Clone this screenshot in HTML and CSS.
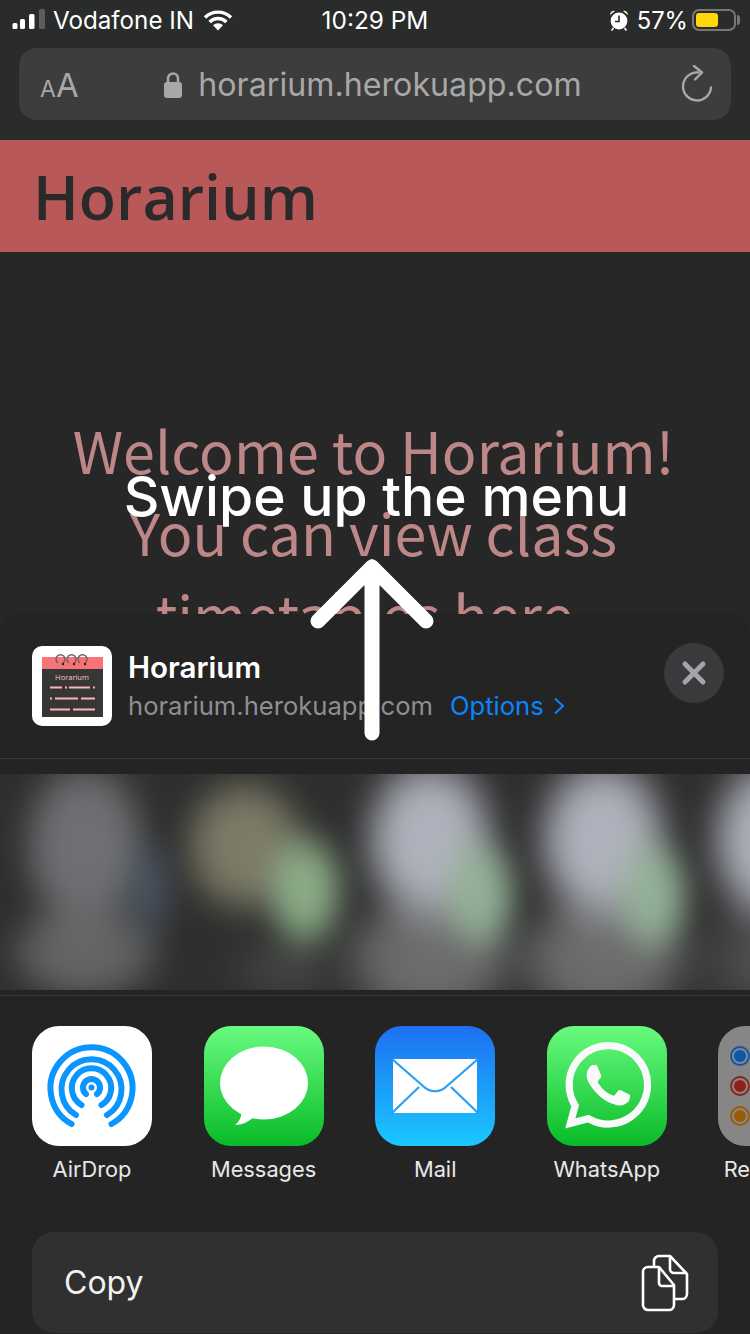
FILE: index.html
```html
<!DOCTYPE html>
<html lang="en">
<head>
  <meta charset="UTF-8">
  <title>Horarium share sheet</title>
  <link rel="stylesheet" href="styles.css">
</head>
<body>
  <div class="phone">
    <div class="toolbar">
      <div class="status">
        <div class="status-left">
          <svg class="signal" width="34" height="22" viewBox="0 0 34 22">
            <rect x="0.5" y="14" width="5" height="6" rx="1.5" fill="#fff"/>
            <rect x="8" y="10" width="5" height="10" rx="1.5" fill="#fff"/>
            <rect x="17" y="5" width="5.5" height="15" rx="1.5" fill="#fff"/>
            <rect x="27" y="0" width="6" height="20" rx="1.5" fill="#5c5c5c"/>
          </svg>
          <span>Vodafone IN</span>
          <svg width="30" height="24" viewBox="0 0 30 24">
            <path d="M2 9.5a18.5 18.5 0 0 1 26 0M6.6 14a12 12 0 0 1 16.8 0" fill="none" stroke="#fff" stroke-width="3.4" stroke-linecap="butt"/>
            <path d="M10 17.2a7.2 7.2 0 0 1 10 0L15 22.5z" fill="#fff"/>
          </svg>
        </div>
        <div class="status-time">10:29 PM</div>
        <div class="status-right">
          <svg width="20" height="22" viewBox="0 0 20 22">
            <circle cx="10" cy="12" r="8.4" fill="#fff"/>
            <path d="M10 6.5V12.5H6" fill="none" stroke="#2a2b2b" stroke-width="1.6"/>
            <path d="M1 6a4 4 0 0 1 5-4zM19 6a4 4 0 0 0-5-4z" fill="#fff"/>
            <path d="M4.5 19l-2 2.4M15.5 19l2 2.4" stroke="#fff" stroke-width="1.6"/>
          </svg>
          <span class="percent">57%</span>
          <div class="battery"><div class="battery-fill"></div></div>
        </div>
      </div>
      <div class="urlbar">
        <div class="aa"><span class="aa-small">A</span>A</div>
        <div class="url">
          <svg width="20" height="27" viewBox="0 0 20 27">
            <path d="M5 12V7.5a5 5 0 0 1 10 0V12" fill="none" stroke="#a8a8a8" stroke-width="2.6"/>
            <rect x="1" y="11" width="18" height="16" rx="3" fill="#a8a8a8"/>
          </svg>
          <span>horarium.herokuapp.com</span>
        </div>
        <svg width="32" height="38" viewBox="0 0 32 38">
          <path d="M17.5 7.5a14 14 0 1 0 12.5 15" fill="none" stroke="#a8a8a8" stroke-width="2.4" stroke-linecap="round"/>
          <path d="M13 1l8 6.5-7 7" fill="none" stroke="#a8a8a8" stroke-width="2.4" stroke-linecap="round" stroke-linejoin="round"/>
        </svg>
      </div>
    </div>

    <div class="site-header">Horarium</div>
    <div class="site-body">Welcome to Horarium! You can view class <span class="site-last">timetables here</span></div>

    <div class="sheet">
      <div class="sheet-head">
        <svg class="site-icon" width="80" height="80" viewBox="0 0 80 80">
          <rect width="80" height="80" rx="10" fill="#fff"/>
          <rect x="10" y="11" width="61" height="60" fill="#363636"/>
          <rect x="10" y="11" width="61" height="12" fill="#f87378"/>
          <g fill="none" stroke="#666" stroke-width="1.4">
            <path d="M26 17a4.500 4.500 0 1 1 5 0M37 17a4.500 4.500 0 1 1 5 0M48 17a4.500 4.500 0 1 1 5 0"/>
          </g>
          <g fill="#222">
            <circle cx="31" cy="18" r="1.200"/><circle cx="42" cy="18" r="1.200"/><circle cx="53" cy="18" r="1.200"/>
          </g>
          <text x="40" y="34" class="site-icon-text" text-anchor="middle">Horarium</text>
          <g stroke="#ffb3b3" stroke-width="1.800">
            <path d="M18 41.500H30M33 41.500H35M37 41.500H58M61 41.500H63"/>
            <path d="M18 52.500H20M23 52.500H46M49 52.500H63"/>
            <path d="M18 63.500H38M41 63.500H63"/>
          </g>
        </svg>
        <div class="site-info">
          <div class="site-title">Horarium</div>
          <div class="site-sub">
            <span>horarium.herokuapp.com</span>
            <span class="options">Options
              <svg width="12" height="18" viewBox="0 0 12 18"><path d="M2 1.500L10 9 2 16.500" fill="none" stroke="#0a84ff" stroke-width="2"/></svg>
            </span>
          </div>
        </div>
        <div class="close">
          <svg width="26" height="26" viewBox="0 0 26 26"><path d="M4 4L22 22M22 4L4 22" stroke="#a3a3a8" stroke-width="5" stroke-linecap="round"/></svg>
        </div>
      </div>

      <div class="people"></div>

      <div class="apps">
        <div class="app">
          <svg class="app-icon" width="120" height="120" viewBox="0 0 120 120">
            <rect width="120" height="120" rx="27" fill="#fff"/>
            <g fill="none" stroke="#0a95ff" stroke-width="6" stroke-linecap="round">
              <path d="M39.500 98A41 41 0 1 1 79.500 98"/>
              <path d="M44 89A30 30 0 1 1 75 89"/>
              <path d="M49.500 79A19.700 19.700 0 1 1 69.500 79"/>
              <path d="M54 68A8.500 8.500 0 1 1 65 68"/>
            </g>
            <circle cx="59.500" cy="61.500" r="3" fill="#0a95ff"/>
          </svg>
          <div class="app-name">AirDrop</div>
        </div>
        <div class="app">
          <svg class="app-icon" width="120" height="120" viewBox="0 0 120 120">
            <defs>
              <linearGradient id="green" x1="0" y1="0" x2="0" y2="1">
                <stop offset="0" stop-color="#68fb7f"/>
                <stop offset="1" stop-color="#09bb28"/>
              </linearGradient>
              <linearGradient id="blue" x1="0" y1="0" x2="0" y2="1">
                <stop offset="0" stop-color="#1d6ff2"/>
                <stop offset="1" stop-color="#1ac8ff"/>
              </linearGradient>
            </defs>
            <rect width="120" height="120" rx="27" fill="url(#green)"/>
            <ellipse cx="60" cy="57" rx="44" ry="36.500" fill="#fff"/>
            <path d="M37 84C38 90 36 95 31 99C38 99 44 96 50 91z" fill="#fff"/>
          </svg>
          <div class="app-name">Messages</div>
        </div>
        <div class="app">
          <svg class="app-icon" width="120" height="120" viewBox="0 0 120 120">
            <rect width="120" height="120" rx="27" fill="url(#blue)"/>
            <rect x="18" y="33" width="84" height="54" rx="2" fill="#fff"/>
            <g fill="none" stroke="#2a9ff5" stroke-width="2.200">
              <path d="M17 33L48 60C55 67 65 67 72 60L103 33"/>
              <path d="M17 87L44 61M103 87L76 61"/>
            </g>
          </svg>
          <div class="app-name">Mail</div>
        </div>
        <div class="app">
          <svg class="app-icon" width="120" height="120" viewBox="0 0 120 120">
            <rect width="120" height="120" rx="27" fill="url(#green)"/>
            <g transform="translate(18 16) scale(3.6)">
              <path fill="#fafafa" d="M17.472 14.382c-.297-.149-1.758-.867-2.03-.967-.273-.099-.471-.148-.67.15-.197.297-.767.966-.94 1.164-.173.199-.347.223-.644.075-.297-.15-1.255-.463-2.39-1.475-.883-.788-1.48-1.761-1.653-2.059-.173-.297-.018-.458.13-.606.134-.133.298-.347.446-.52.149-.174.198-.298.298-.497.099-.198.05-.371-.025-.52-.075-.149-.669-1.612-.916-2.207-.242-.579-.487-.5-.669-.51-.173-.008-.371-.01-.57-.01-.198 0-.52.074-.792.372-.272.297-1.04 1.016-1.04 2.479 0 1.462 1.065 2.875 1.213 3.074.149.198 2.096 3.2 5.077 4.487.709.306 1.262.489 1.694.625.712.227 1.36.195 1.871.118.571-.085 1.758-.719 2.006-1.413.248-.694.248-1.289.173-1.413-.074-.124-.272-.198-.57-.347m-5.421 7.403h-.004a9.87 9.87 0 01-5.031-1.378l-.361-.214-3.741.982.998-3.648-.235-.374a9.86 9.86 0 01-1.51-5.26c.001-5.45 4.436-9.884 9.888-9.884 2.64 0 5.122 1.03 6.988 2.898a9.825 9.825 0 012.893 6.994c-.003 5.45-4.437 9.884-9.885 9.884m8.413-18.297A11.815 11.815 0 0012.05 0C5.495 0 .16 5.335.157 11.892c0 2.096.547 4.142 1.588 5.945L.057 24l6.305-1.654a11.882 11.882 0 005.683 1.448h.005c6.554 0 11.89-5.335 11.893-11.893a11.821 11.821 0 00-3.48-8.413z"/>
            </g>
          </svg>
          <div class="app-name">WhatsApp</div>
        </div>
        <div class="app">
          <svg class="app-icon" width="120" height="120" viewBox="0 0 120 120">
            <rect width="120" height="120" rx="27" fill="#868686"/>
            <g stroke-width="1.800" fill="#0a56a8" stroke="#0a56a8">
              <circle cx="22" cy="30" r="9" fill="none"/><circle cx="22" cy="30" r="6" stroke="none"/>
            </g>
            <g stroke-width="1.800" fill="#8f2019" stroke="#8f2019">
              <circle cx="22" cy="60" r="9" fill="none"/><circle cx="22" cy="60" r="6" stroke="none"/>
            </g>
            <g stroke-width="1.800" fill="#9a5b05" stroke="#9a5b05">
              <circle cx="22" cy="90" r="9" fill="none"/><circle cx="22" cy="90" r="6" stroke="none"/>
            </g>
          </svg>
          <div class="app-name">Reminders</div>
        </div>
      </div>

      <div class="action">
        <span>Copy</span>
        <svg width="48" height="58" viewBox="0 0 48 58">
          <g fill="none" stroke="#fff" stroke-width="2.600" stroke-linejoin="round">
            <path d="M13 13V7a5 5 0 0 1 5-5h11l17 18v20a5 5 0 0 1-5 5h-9"/>
            <path d="M29 2v13a4 4 0 0 0 4 4h13"/>
            <path d="M7 13h11l15 18v20a5 5 0 0 1-5 5H7a5 5 0 0 1-5-5V18a5 5 0 0 1 5-5z"/>
            <path d="M18 13v16a3 3 0 0 0 3 3h12"/>
          </g>
        </svg>
      </div>
    </div>

    <div class="hint">Swipe up the menu</div>
    <svg class="hint-arrow" width="130" height="190" viewBox="0 0 130 190">
      <path d="M65 12V178M11 66L65 12 119 66" fill="none" stroke="#fff" stroke-width="15" stroke-linecap="round" stroke-linejoin="round"/>
    </svg>
  </div>
</body>
</html>
```

FILE: styles.css
```css
body {
  margin: 0;
  background-color: #272727;
  font-family: Inter, "Liberation Sans", sans-serif;
}
.phone {
  position: relative;
  width: 750px;
  height: 1334px;
  overflow: hidden;
  background-color: #272727;
}
.toolbar {
  height: 140px;
  box-sizing: border-box;
  background-color: #2a2b2b;
}
.status {
  height: 40px;
  margin-bottom: 8px;
  padding: 0 12px;
  display: grid;
  grid-template-columns: 1fr auto 1fr;
  align-items: center;
  color: #fff;
  font-size: 24.4px;
}
.status-left {
  display: flex;
  align-items: center;
  gap: 9px;
  font-size: 24.2px;
}
.signal {
  margin-right: -2px;
}
.status-right {
  display: flex;
  align-items: center;
  justify-content: flex-end;
  gap: 8px;
  padding-right: 2px;
}
.percent {
  font-size: 23.8px;
}
.battery {
  position: relative;
  width: 44px;
  height: 22px;
  box-sizing: border-box;
  border: 2px solid #777;
  border-radius: 7px;
  padding: 2px;
  margin-left: -4px;
}
.battery::after {
  content: "";
  position: absolute;
  right: -6px;
  top: 4px;
  width: 3px;
  height: 10px;
  border-radius: 0 3px 3px 0;
  background-color: #777;
}
.battery-fill {
  width: 22px;
  height: 14px;
  border-radius: 3px;
  background-color: #ffd60a;
}
.urlbar {
  margin: 0 19px;
  height: 72px;
  padding: 0 18px 0 21px;
  display: flex;
  align-items: center;
  border-radius: 18px;
  background-color: #3d3d3d;
  color: #a8a8a8;
}
.aa {
  font-size: 33px;
  width: 40px;
  line-height: 1;
  padding-top: 3px;
}
.aa-small {
  font-size: 23px;
}
.url {
  flex: 1;
  display: flex;
  align-items: center;
  justify-content: center;
  gap: 15px;
  font-size: 32.2px;
  padding-right: 16px;
}
.site-header {
  height: 112px;
  padding-left: 33px;
  background-color: #b95858;
  color: #2a2a2a;
  font-family: "Open Sans", sans-serif;
  font-size: 61px;
  font-weight: 600;
  line-height: 114px;
}
.site-body {
  margin-top: 156px;
  padding: 0 49px 0 46px;
  text-align: center;
  color: #bd8787;
  font-family: "Noto Sans CJK JP", "Noto Sans", sans-serif;
  font-weight: 400;
  font-size: 57.4px;
  line-height: 82px;
}
.site-last {
  display: block;
  padding-right: 18px;
}
.sheet {
  position: absolute;
  left: 0;
  right: 0;
  top: 614px;
  bottom: 0;
  border-radius: 20px 20px 0 0;
  background-color: #242424;
}
.sheet-head {
  height: 144px;
  padding-left: 32px;
  padding-right: 26px;
  display: flex;
  align-items: center;
  gap: 17px;
  border-bottom: 1px solid #3a3a3a;
}
.site-icon-text {
  font-family: "Open Sans", sans-serif;
  font-size: 7.5px;
  fill: #ffc4c4;
}
.site-info {
  flex: 1;
}
.site-title {
  color: #fff;
  font-size: 29.6px;
  font-weight: 600;
  line-height: 34px;
  margin-left: -1px;
  margin-bottom: 6px;
}
.site-sub {
  display: flex;
  gap: 17px;
  margin-left: -1px;
  color: #8f8f93;
  font-size: 25.6px;
  line-height: 32px;
}
.options {
  color: #0a84ff;
  display: flex;
  align-items: center;
  gap: 9px;
}
.close {
  width: 60px;
  height: 60px;
  border-radius: 50%;
  margin-bottom: 26px;
  display: flex;
  align-items: center;
  justify-content: center;
  background-color: #3a3a3c;
}
/* suggested contacts, blurred out in the screenshot */
.people {
  position: relative;
  margin-top: 15px;
  height: 216px;
  overflow: hidden;
  background-color: #2e2e2e;
}
.people::before {
  content: "";
  position: absolute;
  inset: -40px;
  filter: blur(13px);
  background-color: #2e2e2e;
  background-image:
    radial-gradient(ellipse 46px 68px at 345px 156px, #8fb08a, rgba(143, 176, 138, 0.9) 50%, rgba(100, 140, 100, 0)),
    radial-gradient(ellipse 44px 68px at 520px 160px, #96b499, rgba(150, 180, 153, 0.9) 50%, rgba(115, 150, 120, 0)),
    radial-gradient(ellipse 44px 68px at 693px 162px, #96b499, rgba(150, 180, 153, 0.9) 50%, rgba(115, 150, 120, 0)),
    radial-gradient(ellipse 28px 56px at 190px 155px, #4a5563, rgba(74, 85, 99, 0.7) 55%, rgba(74, 85, 99, 0)),
    radial-gradient(ellipse 78px 100px at 470px 106px, #b2b5bf, rgba(178, 181, 191, 0.95) 50%, rgba(178, 181, 191, 0)),
    radial-gradient(ellipse 78px 100px at 643px 106px, #b2b5bf, rgba(178, 181, 191, 0.95) 50%, rgba(178, 181, 191, 0)),
    radial-gradient(ellipse 78px 100px at 816px 106px, #b2b5bf, rgba(178, 181, 191, 0.95) 50%, rgba(178, 181, 191, 0)),
    radial-gradient(ellipse 72px 80px at 285px 112px, #7e7d68, rgba(126, 125, 104, 0.95) 50%, rgba(126, 125, 104, 0)),
    radial-gradient(ellipse 72px 100px at 125px 112px, #707174, rgba(112, 113, 116, 0.95) 55%, rgba(112, 113, 116, 0)),
    radial-gradient(ellipse 88px 58px at 125px 218px, #686868, rgba(104, 104, 104, 0.85) 55%, rgba(104, 104, 104, 0)),
    radial-gradient(ellipse 70px 45px at 325px 235px, #484846, rgba(72, 72, 70, 0)),
    radial-gradient(ellipse 100px 75px at 470px 225px, #707070, rgba(112, 112, 112, 0.85) 55%, rgba(112, 112, 112, 0)),
    radial-gradient(ellipse 100px 75px at 643px 225px, #707070, rgba(112, 112, 112, 0.85) 55%, rgba(112, 112, 112, 0)),
    radial-gradient(ellipse 100px 75px at 816px 225px, #5a5a5a, rgba(90, 90, 90, 0));
}
.apps {
  margin-top: 5px;
  border-top: 1px solid #3c3c3c;
  padding: 30px 0 0 32px;
  display: flex;
  gap: 51.6px;
}
.app {
  flex: 0 0 120px;
  width: 120px;
}
.app-icon {
  display: block;
}
.app-name {
  margin-top: 10px;
  white-space: nowrap;
  color: #e8e8e8;
  font-size: 21.8px;
  line-height: 26px;
  display: flex;
  justify-content: center;
}
.action {
  position: absolute;
  left: 32px;
  right: 32px;
  bottom: 1px;
  height: 101px;
  box-sizing: border-box;
  padding: 0 29px 0 32px;
  display: flex;
  align-items: center;
  justify-content: space-between;
  border-radius: 22px;
  background-color: #303030;
  color: #f2f2f2;
  font-size: 32px;
}
.hint {
  position: absolute;
  left: 0;
  top: 462px;
  width: 753px;
  text-align: center;
  color: #fff;
  font-size: 55.2px;
  font-weight: 500;
  line-height: 68px;
}
.hint-arrow {
  position: absolute;
  left: 307px;
  top: 555px;
}
```
